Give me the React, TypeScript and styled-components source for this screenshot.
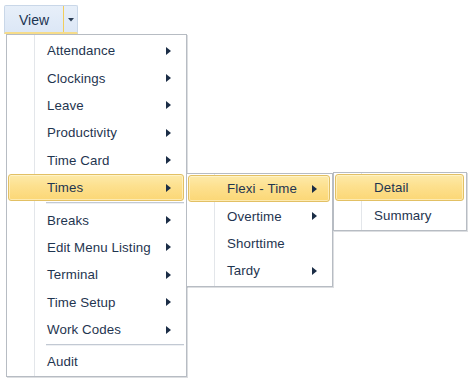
import React from "react";
import styled, { createGlobalStyle } from "styled-components";

const GlobalStyle = createGlobalStyle`
    html, body {
        margin: 0;
        padding: 0;
        background: #ffffff;
    }
    body {
        font-family: "Liberation Sans", Arial, sans-serif;
        font-size: 13.3px;
        color: #1f3550;
    }
`;

const Page = styled.div`
    width: 476px;
    height: 382px;
    padding: 5px 0 0 4px;
    box-sizing: border-box;
    overflow: hidden;
`;

// split-кнопка "View"
const SplitButton = styled.div`
    display: flex;
    width: 74px;
    height: 29px;
    box-sizing: border-box;
    background: linear-gradient(#e7eff9, #dce7f6);
    border: 1px solid #c9d7e8;
    border-bottom: 2px solid #f6dc8a;
    border-radius: 2px 2px 0 0;
`;

const ButtonLabel = styled.div`
    flex: 1;
    display: flex;
    align-items: center;
    justify-content: center;
    padding-top: 1px;
    color: #1c3452;
    font-size: 14px;
    border-right: 1px solid #f1cd5c;
`;

const ButtonDrop = styled.div`
    width: 13px;
    display: flex;
    align-items: center;
    justify-content: center;
    padding-top: 2px;
`;

const Menu = styled.div<{ $width: number }>`
    position: relative;
    width: ${(p) => p.$width}px;
    box-sizing: border-box;
    background: #ffffff;
    border: 1px solid #b7bcc3;
    box-shadow: 1px 1px 0 rgba(60, 70, 90, 0.18);
    padding: 2px 0 0;
    display: flex;
    flex-direction: column;
`;

const RootMenu = styled(Menu)`
    margin-left: 2px;
`;

// вложенное меню, сдвиг от правого края родительского пункта
const SubMenu = styled(Menu)<{ $dx: number; $dy: number }>`
    position: absolute;
    top: ${(p) => p.$dy}px;
    left: calc(100% + ${(p) => p.$dx}px);
    padding: 1px 0 1px;
    z-index: 2;
`;

// вертикальная полоса под иконки
const IconRail = styled.div`
    position: absolute;
    top: 0;
    bottom: 0;
    left: 27px;
    width: 1px;
    background: #e3e6ea;
`;

const Item = styled.div<{ $active?: boolean }>`
    position: relative;
    height: 27.4px;
    margin: 0 2px 0 1px;
    box-sizing: border-box;
    display: flex;
    align-items: center;
    padding: 0 12px 0 38px;
    border-radius: 3px;
    border: 1px solid ${(p) => (p.$active ? "#e2c064" : "transparent")};
    background: ${(p) =>
        p.$active
            ? "linear-gradient(#fdeaa9 0%, #fde08e 45%, #fbd776 100%)"
            : "transparent"};
    box-shadow: ${(p) =>
        p.$active ? "inset 0 0 0 1px rgba(255, 250, 225, 0.55)" : "none"};
    z-index: 1;
`;

const Label = styled.span`
    flex: 1;
    white-space: nowrap;
    letter-spacing: 0.1px;
`;

const Separator = styled.div`
    height: 1px;
    margin: 1px 2px 2px 39px;
    background: #c2c9d3;
    border-bottom: 1px solid #eef0f3;
`;

const Arrow = () => (
    <svg width="5" height="8" viewBox="0 0 5 8">
        <path d="M0 0 L5 4 L0 8 Z" fill="#1b2d46" />
    </svg>
);

const DownArrow = () => (
    <svg width="6" height="4" viewBox="0 0 6 4">
        <path d="M0 0 L6 0 L3 3.5 Z" fill="#2b3d55" />
    </svg>
);

const firstGroup = ["Attendance", "Clockings", "Leave", "Productivity", "Time Card"];
const secondGroup = ["Breaks", "Edit Menu Listing", "Terminal", "Time Setup", "Work Codes"];

export default function App() {
    return (
        <Page>
            <GlobalStyle />
            <SplitButton>
                <ButtonLabel>View</ButtonLabel>
                <ButtonDrop>
                    <DownArrow />
                </ButtonDrop>
            </SplitButton>

            <RootMenu $width={181}>
                <IconRail />
                {firstGroup.map((name) => (
                    <Item key={name}>
                        <Label>{name}</Label>
                        <Arrow />
                    </Item>
                ))}
                <Item $active>
                    <Label>Times</Label>
                    <Arrow />
                    <SubMenu $width={147} $dx={3} $dy={-2}>
                        <IconRail />
                        <Item $active>
                            <Label>Flexi - Time</Label>
                            <Arrow />
                            <SubMenu $width={134} $dx={4} $dy={-4}>
                                <IconRail />
                                <Item $active>
                                    <Label>Detail</Label>
                                </Item>
                                <Item>
                                    <Label>Summary</Label>
                                </Item>
                            </SubMenu>
                        </Item>
                        <Item>
                            <Label>Overtime</Label>
                            <Arrow />
                        </Item>
                        <Item>
                            <Label>Shorttime</Label>
                        </Item>
                        <Item>
                            <Label>Tardy</Label>
                            <Arrow />
                        </Item>
                    </SubMenu>
                </Item>
                <Separator />
                {secondGroup.map((name) => (
                    <Item key={name}>
                        <Label>{name}</Label>
                        <Arrow />
                    </Item>
                ))}
                <Separator />
                <Item>
                    <Label>Audit</Label>
                </Item>
            </RootMenu>
        </Page>
    );
}
